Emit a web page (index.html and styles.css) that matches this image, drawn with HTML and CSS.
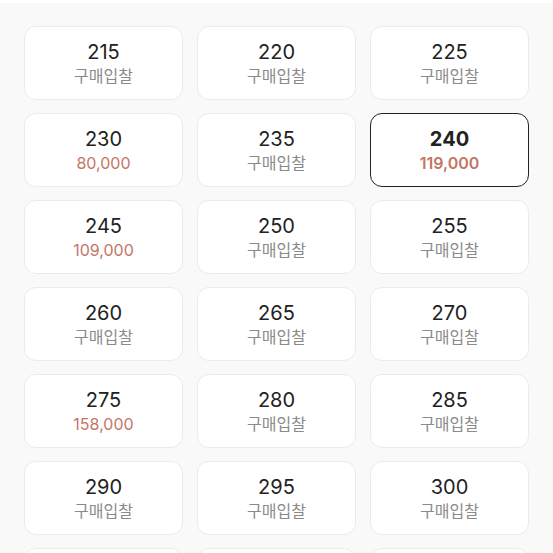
FILE: index.html
```html
<!DOCTYPE html>
<html lang="ko">
<head>
<meta charset="utf-8">
<link rel="stylesheet" href="styles.css">
</head>
<body>
<div class="topbar"></div>
<div class="grid">
  <div class="card"><div class="size">215</div><div class="sub">구매입찰</div></div>
  <div class="card"><div class="size">220</div><div class="sub">구매입찰</div></div>
  <div class="card"><div class="size">225</div><div class="sub">구매입찰</div></div>
  <div class="card"><div class="size">230</div><div class="sub price">80,000</div></div>
  <div class="card"><div class="size">235</div><div class="sub">구매입찰</div></div>
  <div class="card selected"><div class="size">240</div><div class="sub price">119,000</div></div>
  <div class="card"><div class="size">245</div><div class="sub price">109,000</div></div>
  <div class="card"><div class="size">250</div><div class="sub">구매입찰</div></div>
  <div class="card"><div class="size">255</div><div class="sub">구매입찰</div></div>
  <div class="card"><div class="size">260</div><div class="sub">구매입찰</div></div>
  <div class="card"><div class="size">265</div><div class="sub">구매입찰</div></div>
  <div class="card"><div class="size">270</div><div class="sub">구매입찰</div></div>
  <div class="card"><div class="size">275</div><div class="sub price">158,000</div></div>
  <div class="card"><div class="size">280</div><div class="sub">구매입찰</div></div>
  <div class="card"><div class="size">285</div><div class="sub">구매입찰</div></div>
  <div class="card"><div class="size">290</div><div class="sub">구매입찰</div></div>
  <div class="card"><div class="size">295</div><div class="sub">구매입찰</div></div>
  <div class="card"><div class="size">300</div><div class="sub">구매입찰</div></div>
  <div class="card"></div>
  <div class="card"></div>
  <div class="card"></div>
</div>
</body>
</html>
```
FILE: styles.css
```css
html, body {
  margin: 0;
  padding: 0;
  background: #f9f9f9;
  height: 553px;
  overflow: hidden;
  font-family: Inter, "Noto Sans CJK KR", sans-serif;
}
.topbar {
  height: 3px;
  background: #ffffff;
}
.grid {
  display: grid;
  grid-template-columns: repeat(3, 159px);
  column-gap: 14px;
  row-gap: 13px;
  padding: 23px 24px 0 24px;
}
.card {
  box-sizing: border-box;
  height: 74px;
  background: #ffffff;
  border: 1px solid #ebebeb;
  border-radius: 12px;
  display: flex;
  flex-direction: column;
  align-items: center;
  justify-content: center;
  gap: 2px;
}
.size {
  font-size: 20px;
  line-height: 24px;
  color: #222222;
}
.sub {
  font-size: 16px;
  line-height: 21px;
  color: #8a8a8a;
}
.price {
  color: #c27666;
}
.selected {
  border: 1.5px solid #222222;
}
.selected .size {
  font-weight: 700;
}
.selected .price {
  font-weight: 600;
}
```
